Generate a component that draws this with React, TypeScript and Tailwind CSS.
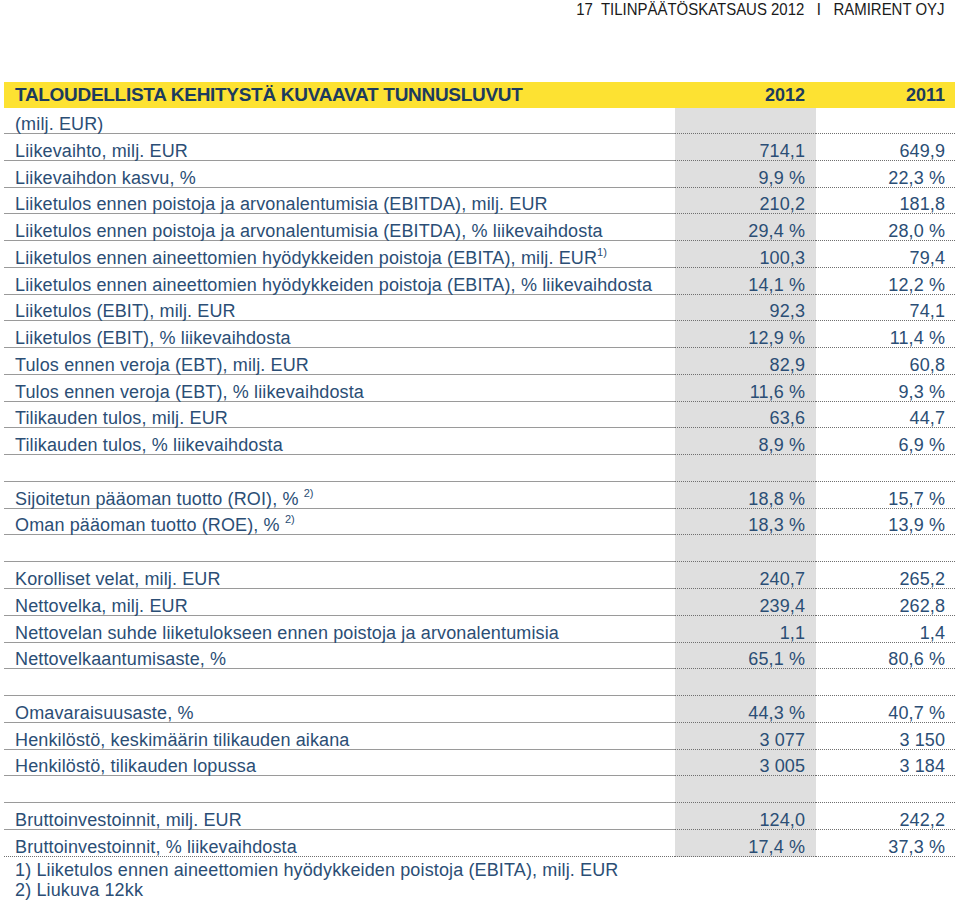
import React from "react";

type Row = { label?: string; sup?: string; a?: string; b?: string; last?: boolean };

const rows: Row[] = [
  { label: "Liikevaihto, milj. EUR", a: "714,1", b: "649,9" },
  { label: "Liikevaihdon kasvu, %", a: "9,9 %", b: "22,3 %" },
  { label: "Liiketulos ennen poistoja ja arvonalentumisia (EBITDA), milj. EUR", a: "210,2", b: "181,8" },
  { label: "Liiketulos ennen poistoja ja arvonalentumisia (EBITDA), % liikevaihdosta", a: "29,4 %", b: "28,0 %" },
  { label: "Liiketulos ennen aineettomien hyödykkeiden poistoja (EBITA), milj. EUR", sup: "1)", a: "100,3", b: "79,4" },
  { label: "Liiketulos ennen aineettomien hyödykkeiden poistoja (EBITA), % liikevaihdosta", a: "14,1 %", b: "12,2 %" },
  { label: "Liiketulos (EBIT), milj. EUR", a: "92,3", b: "74,1" },
  { label: "Liiketulos (EBIT), % liikevaihdosta", a: "12,9 %", b: "11,4 %" },
  { label: "Tulos ennen veroja (EBT), milj. EUR", a: "82,9", b: "60,8" },
  { label: "Tulos ennen veroja (EBT), % liikevaihdosta", a: "11,6 %", b: "9,3 %" },
  { label: "Tilikauden tulos, milj. EUR", a: "63,6", b: "44,7" },
  { label: "Tilikauden tulos, % liikevaihdosta", a: "8,9 %", b: "6,9 %" },
  {},
  { label: "Sijoitetun pääoman tuotto (ROI), % ", sup: "2)", a: "18,8 %", b: "15,7 %" },
  { label: "Oman pääoman tuotto (ROE), % ", sup: "2)", a: "18,3 %", b: "13,9 %" },
  {},
  { label: "Korolliset velat, milj. EUR", a: "240,7", b: "265,2" },
  { label: "Nettovelka, milj. EUR", a: "239,4", b: "262,8" },
  { label: "Nettovelan suhde liiketulokseen ennen poistoja ja arvonalentumisia", a: "1,1", b: "1,4" },
  { label: "Nettovelkaantumisaste, %", a: "65,1 %", b: "80,6 %" },
  {},
  { label: "Omavaraisuusaste, %", a: "44,3 %", b: "40,7 %" },
  { label: "Henkilöstö, keskimäärin tilikauden aikana", a: "3 077", b: "3 150" },
  { label: "Henkilöstö, tilikauden lopussa", a: "3 005", b: "3 184" },
  {},
  { label: "Bruttoinvestoinnit, milj. EUR", a: "124,0", b: "242,2" },
  { label: "Bruttoinvestoinnit, % liikevaihdosta", a: "17,4 %", b: "37,3 %", last: true },
];

function DataRow({ r }: { r: Row }) {
  return (
    <div className="flex h-[26.78px]">
      <div
        className={
          "w-[671px] flex items-end pl-[11px] whitespace-nowrap " +
          (r.last ? "border-b border-dotted border-[#6f6f6f]" : "border-b border-solid border-[#9a9a9a]")
        }
      >
        <span className="leading-[17px] tracking-[0.13px]">
          {r.label}
          {r.sup && (
            <span className="inline-block text-[11px] leading-none relative top-[-8px] tracking-normal">{r.sup}</span>
          )}
        </span>
      </div>
      <div className="w-[141px] bg-[#dfdfdf] border-b border-dotted border-[#6f6f6f] flex items-end justify-end pr-[11px]">
        <span className="leading-[17px] tracking-[0.1px]">{r.a}</span>
      </div>
      <div className="w-[139px] border-b border-dotted border-[#6f6f6f] flex items-end justify-end pr-[10px]">
        <span className="leading-[17px] tracking-[0.1px]">{r.b}</span>
      </div>
    </div>
  );
}

export default function App() {
  return (
    <div className="w-[960px] h-[907px] bg-white overflow-hidden font-['Liberation_Sans',Arial,sans-serif] text-[18px] text-[#2b4e75]">
      <div className="h-[82px] flex justify-end pr-[15px]">
        <div className="inline-block origin-top-right scale-x-[0.88] text-[17px] leading-[19px] text-[#1a1a1a] whitespace-pre">
          {"17  TILINPÄÄTÖSKATSAUS 2012   I   RAMIRENT OYJ"}
        </div>
      </div>
      <div className="ml-[4px] w-[951px]">
        <div className="flex h-[26px] bg-[#fde232] text-[#1c3b5e] font-bold">
          <div className="w-[671px] flex items-center pl-[11px] text-[19px] tracking-[-0.3px] whitespace-nowrap">
            TALOUDELLISTA KEHITYSTÄ KUVAAVAT TUNNUSLUVUT
          </div>
          <div className="w-[141px] flex items-center justify-end pr-[11px]">2012</div>
          <div className="w-[139px] flex items-center justify-end pr-[10px]">2011</div>
        </div>
        <div className="flex h-[26px]">
          <div className="w-[671px] border-b border-solid border-[#9a9a9a] flex items-end pl-[11px]">
            <span className="leading-[17px] tracking-[0.13px]">(milj. EUR)</span>
          </div>
          <div className="w-[141px] bg-[#dfdfdf] border-b border-dotted border-[#6f6f6f]" />
          <div className="w-[139px] border-b border-dotted border-[#6f6f6f]" />
        </div>
        {rows.map((r, i) => (
          <DataRow key={i} r={r} />
        ))}
        <div className="pl-[11px] pt-[3px] leading-[20px] tracking-[0.13px]">
          <div>1) Liiketulos ennen aineettomien hyödykkeiden poistoja (EBITA), milj. EUR</div>
          <div>2) Liukuva 12kk</div>
        </div>
      </div>
    </div>
  );
}
